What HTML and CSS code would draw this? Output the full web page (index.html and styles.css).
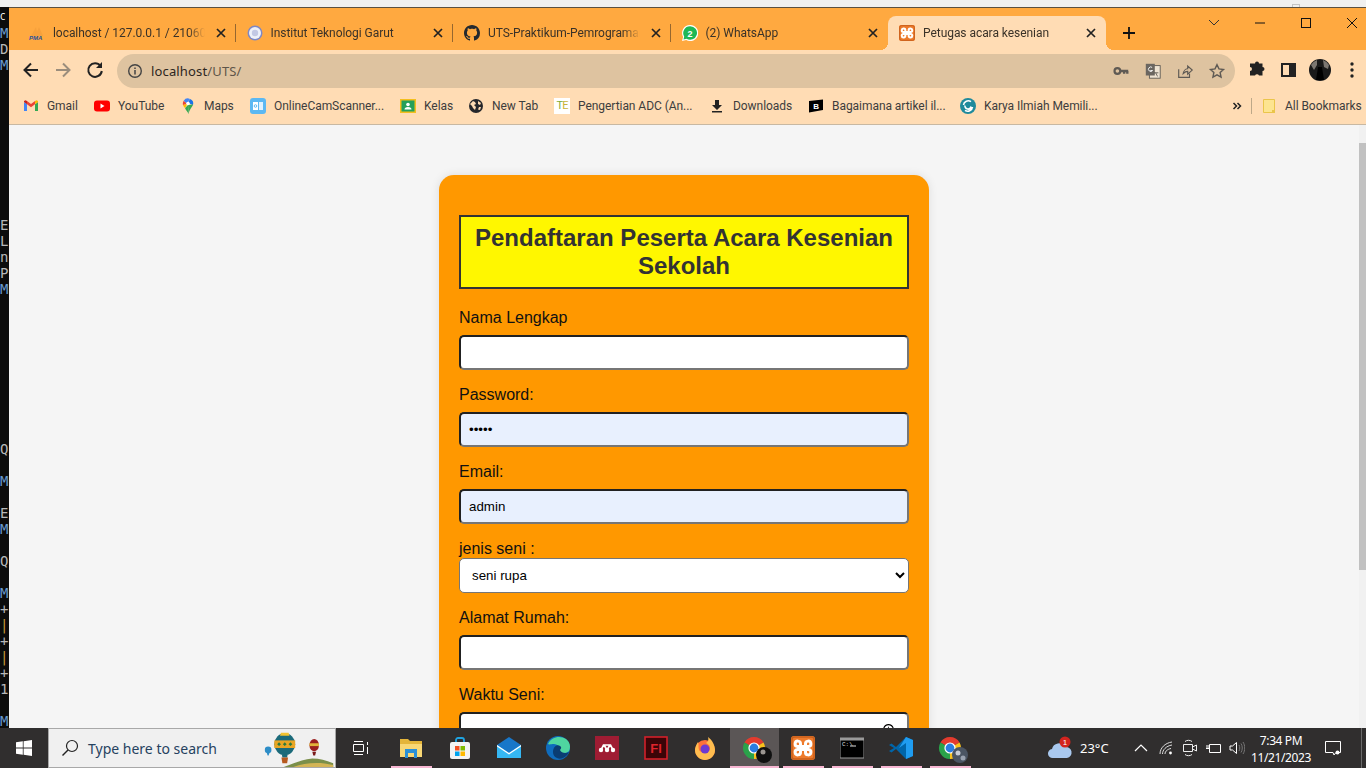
FILE: index.html
```html
<!DOCTYPE html>
<html lang="en">
<head>
    <meta charset="UTF-8">
    <meta name="viewport" content="width=device-width, initial-scale=1.0">
    <title>Petugas acara kesenian</title>
    <link rel="stylesheet" href="styles.css">
</head>
<body>
    <svg class="defs" width="0" height="0">
        <symbol id="chrome" viewBox="0 0 24 24">
            <path fill="#e33b2e" d="M12 12L2.47 6.500A11 11 0 0 1 21.530 6.500Z"/>
            <path fill="#f9c11c" d="M12 12L21.530 6.500A11 11 0 0 1 12 23Z"/>
            <path fill="#2aa24a" d="M12 12L12 23A11 11 0 0 1 2.47 6.500Z"/>
            <circle cx="12" cy="12" r="5.600" fill="#fff"/>
            <circle cx="12" cy="12" r="4.400" fill="#2a7de1"/>
        </symbol>
        <symbol id="xampp" viewBox="0 0 24 24">
            <rect width="24" height="24" rx="3" fill="#ee7b2c"/>
            <rect x="1" y="1" width="22" height="22" rx="2.500" fill="none" stroke="#c9601c" stroke-width="1.500"/>
            <path fill="none" stroke="#fff" stroke-width="3" d="M9.500 9.500V8A2.700 2.700 0 1 0 6.500 10.500H17.500A2.700 2.700 0 1 0 14.500 8V16A2.700 2.700 0 1 0 17.500 13.500H6.500A2.700 2.700 0 1 0 9.500 16V9.500"/>
        </symbol>
        <symbol id="close" viewBox="0 0 12 12">
            <path stroke="#222" stroke-width="1.700" fill="none" d="M2 2L10 10M10 2L2 10"/>
        </symbol>
    </svg>

    <div class="topstrip">
        <span class="ghost-max"></span>
    </div>

    <div class="screen">
        <pre class="console"><span class="con-icon">C</span>
<b>M</b>
D
<b>M</b>









E
L
n
P
<b>M</b>









Q

<b>M</b>

E
<b>M</b>

Q

<b>M</b>
+
<i>|</i>
+
<i>|</i>
+
1

<b>M</b></pre>

        <div class="browser">
            <div class="tabstrip">
                <div class="tab">
                    <svg class="favicon" viewBox="0 0 16 16">
                        <path fill="#f6a13c" d="M2 11L7 2l1 5 2-5 4 9z"/>
                        <text x="0" y="15" class="pma-text">PMA</text>
                    </svg>
                    <span class="tab-title">localhost / 127.0.0.1 / 21060</span>
                    <svg class="tab-x"><use href="#close"/></svg>
                </div>
                <div class="tab">
                    <svg class="favicon" viewBox="0 0 16 16">
                        <circle cx="8" cy="8" r="7.500" fill="#7f88c4"/>
                        <circle cx="8" cy="8" r="6" fill="#eef0f8"/>
                        <circle cx="8" cy="8" r="3.200" fill="#c3c8e4"/>
                    </svg>
                    <span class="tab-title">Institut Teknologi Garut</span>
                    <svg class="tab-x"><use href="#close"/></svg>
                </div>
                <div class="tab">
                    <svg class="favicon" viewBox="0 0 16 16">
                        <path fill="#24292f" d="M8 0C3.58 0 0 3.58 0 8c0 3.54 2.29 6.53 5.47 7.59.4.07.55-.17.55-.38 0-.19-.01-.82-.01-1.49-2.01.37-2.53-.49-2.69-.94-.09-.23-.48-.94-.82-1.13-.28-.15-.68-.52-.01-.53.63-.01 1.08.58 1.23.82.72 1.21 1.87.87 2.33.66.07-.52.28-.87.51-1.07-1.78-.2-3.64-.89-3.64-3.95 0-.87.31-1.59.82-2.15-.08-.2-.36-1.02.08-2.12 0 0 .67-.21 2.2.82.64-.18 1.32-.27 2-.27.68 0 1.36.09 2 .27 1.53-1.04 2.2-.82 2.2-.82.44 1.1.16 1.92.08 2.12.51.56.82 1.27.82 2.15 0 3.07-1.87 3.75-3.65 3.95.29.25.54.73.54 1.48 0 1.07-.01 1.93-.01 2.2 0 .21.15.46.55.38A8.013 8.013 0 0016 8c0-4.42-3.58-8-8-8z"/>
                    </svg>
                    <span class="tab-title">UTS-Praktikum-Pemrograman</span>
                    <svg class="tab-x"><use href="#close"/></svg>
                </div>
                <div class="tab">
                    <svg class="favicon" viewBox="0 0 16 16">
                        <path fill="#fff" d="M8 0a8 8 0 0 0-6.900 12L0 16l4.200-1.100A8 8 0 1 0 8 0z"/>
                        <path fill="#1fb855" d="M8 1.200a6.800 6.800 0 0 0-5.800 10.300l-.7 2.900 3-.7A6.800 6.800 0 1 0 8 1.200z"/>
                        <text x="8" y="11.500" class="wa-text">2</text>
                    </svg>
                    <span class="tab-title">(2) WhatsApp</span>
                    <svg class="tab-x"><use href="#close"/></svg>
                </div>
                <div class="tab tab-active">
                    <svg class="favicon"><use href="#xampp"/></svg>
                    <span class="tab-title">Petugas acara kesenian</span>
                    <svg class="tab-x"><use href="#close"/></svg>
                </div>
                <svg class="newtab" viewBox="0 0 14 14"><path stroke="#111" stroke-width="1.800" d="M7 1V13M1 7H13"/></svg>
                <div class="winbtns">
                    <svg class="winbtn" viewBox="0 0 46 30"><path stroke="#333" fill="none" d="M18 12l5 5 5-5"/></svg>
                    <svg class="winbtn" viewBox="0 0 46 30"><path stroke="#111" d="M18 15H28"/></svg>
                    <svg class="winbtn" viewBox="0 0 46 30"><rect x="18.500" y="10.500" width="9" height="9" stroke="#111" fill="none"/></svg>
                    <svg class="winbtn" viewBox="0 0 46 30"><path stroke="#111" fill="none" d="M18 10L28 20M28 10L18 20"/></svg>
                </div>
            </div>

            <div class="toolbar">
                <svg class="navbtn" viewBox="0 0 32 32"><path stroke="#222" stroke-width="2" fill="none" d="M23 16H10M16 9.500L9.500 16L16 22.500"/></svg>
                <svg class="navbtn" viewBox="0 0 32 32"><path stroke="#9b8d7c" stroke-width="2" fill="none" d="M9 16H22M16 9.500L22.500 16L16 22.500"/></svg>
                <svg class="navbtn" viewBox="0 0 32 32"><path stroke="#222" stroke-width="2" fill="none" d="M21.500 12a6.800 6.800 0 1 0 1.300 5"/><path fill="#222" d="M23 8v6h-6z"/></svg>
                <div class="omnibox">
                    <svg class="omni-info" viewBox="0 0 16 16">
                        <circle cx="8" cy="8" r="6.300" fill="none" stroke="#444" stroke-width="1.400"/>
                        <path stroke="#444" stroke-width="1.500" d="M8 7V11.500M8 4.500V6"/>
                    </svg>
                    <span class="url">localhost<em>/UTS/</em></span>
                    <svg class="omni-icon" viewBox="0 0 20 20"><circle cx="6" cy="10" r="3.200" fill="none" stroke="#5f5a54" stroke-width="2.400"/><path stroke="#5f5a54" stroke-width="2.600" d="M9 10H18M13.500 10V13M17 10V13"/></svg>
                    <svg class="omni-icon" viewBox="0 0 20 20"><rect x="6" y="4" width="12" height="14" fill="#eee3d2" stroke="#5f5a54"/><rect x="2" y="2" width="10" height="13" fill="#6b6660"/><path stroke="#fff" fill="none" d="M9 6a2.500 2.500 0 1 0 .5 3.500H7"/><path stroke="#5f5a54" d="M11 12h5M13 12l2 4"/></svg>
                    <svg class="omni-icon" viewBox="0 0 20 20"><path stroke="#5f5a54" stroke-width="1.300" fill="none" d="M3 8V17H15V13M8 13C8.500 9.500 11 7.500 13 7.500V4.500L18 9L13 13.500V10.500C11 10.500 9.500 11.500 8 13Z"/></svg>
                    <svg class="omni-icon" viewBox="0 0 20 20"><path stroke="#5f5a54" stroke-width="1.600" fill="none" d="M10 3l2.200 4.700 5 .6-3.700 3.400 1 5L10 14.200 5.500 16.700l1-5L2.800 8.300l5-.6z"/></svg>
                </div>
                <svg class="navbtn" viewBox="0 0 32 32"><path fill="#222" d="M12 9.500h3a2 2 0 0 1 4 0h3.500V13a2 2 0 0 1 0 4v4.500H19a2.200 2.200 0 0 0-4 0H10V17a2 2 0 0 0 0-4V9.500z"/></svg>
                <svg class="navbtn" viewBox="0 0 32 32"><path fill="none" stroke="#222" stroke-width="2" d="M10 10H23V22H10Z"/><path fill="#222" d="M17 10H23V22H17Z"/></svg>
                <svg class="navbtn" viewBox="0 0 32 32">
                    <circle cx="16" cy="16" r="11" fill="#1a1a1a"/>
                    <path fill="#7c7771" d="M7 11a11 11 0 0 1 6-5v5l-3 5zM25 11a11 11 0 0 0-6-5l1 7 4 2z"/>
                    <path fill="#000" d="M14 13h4l2 13h-8z"/>
                </svg>
                <svg class="navbtn" viewBox="0 0 32 32"><circle cx="16" cy="10" r="1.700" fill="#222"/><circle cx="16" cy="16" r="1.700" fill="#222"/><circle cx="16" cy="22" r="1.700" fill="#222"/></svg>
            </div>

            <div class="bookmarks">
                <div class="bm">
                    <svg class="bm-icon" viewBox="0 0 16 16">
                        <path fill="#4285f4" d="M1 13V4l3 2.300V13z"/><path fill="#34a853" d="M12 13V6.300L15 4v9z"/>
                        <path fill="#ea4335" d="M4 6.300V3l4 3 4-3v3.300L8 9.300z"/><path fill="#fbbc04" d="M12 3l1.500-.7L15 3v1l-3 2.300z"/><path fill="#c5221f" d="M1 3l1.500-.7L4 3v3.300L1 4z"/>
                    </svg>
                    <span>Gmail</span>
                </div>
                <div class="bm">
                    <svg class="bm-icon" viewBox="0 0 16 16"><rect y="2.500" width="16" height="11" rx="3" fill="#f00"/><path fill="#fff" d="M6.500 5.500L10.500 8l-4 2.500z"/></svg>
                    <span>YouTube</span>
                </div>
                <div class="bm">
                    <svg class="bm-icon" viewBox="0 0 16 16">
                        <path fill="#34a853" d="M5 10l3-3 .5 9c-1-2.500-2.500-3.500-3.500-6z"/>
                        <path fill="#fbbc04" d="M3 7l5-2-3 5c-1-1-1.700-2-2-3z"/>
                        <path fill="#ea4335" d="M3.700 2.700L7 5.500 3 7c-.400-1.500 0-3.100.7-4.300z"/>
                        <path fill="#4285f4" d="M3.700 2.700A5 5 0 0 1 10 1L7 5.500z"/>
                        <path fill="#1a73e8" d="M10 1a5 5 0 0 1 3 6L8 5z"/>
                        <path fill="#34a853" d="M8 7l5-.5c-.500 2.500-3.500 4.500-4.500 9.500z"/>
                        <circle cx="8" cy="5.500" r="1.800" fill="#fff"/>
                    </svg>
                    <span>Maps</span>
                </div>
                <div class="bm">
                    <svg class="bm-icon" viewBox="0 0 16 16"><rect width="16" height="16" rx="3" fill="#5cb8f2"/><rect x="3" y="4" width="5" height="8" fill="#fff"/><rect x="9" y="4" width="4" height="8" fill="#dff1fd"/><circle cx="5.500" cy="8" r="1.300" fill="none" stroke="#5cb8f2"/></svg>
                    <span>OnlineCamScanner...</span>
                </div>
                <div class="bm">
                    <svg class="bm-icon" viewBox="0 0 16 16"><rect y="1" width="16" height="14" fill="#f4bf1d"/><rect x="1.500" y="2.500" width="13" height="11" fill="#25a05a"/><circle cx="8" cy="6.500" r="1.800" fill="#fff"/><path fill="#fff" d="M4.500 11.500a3.500 2.500 0 0 1 7 0z"/></svg>
                    <span>Kelas</span>
                </div>
                <div class="bm">
                    <svg class="bm-icon" viewBox="0 0 16 16"><circle cx="8" cy="8" r="7" fill="#26272b"/><path fill="#ffdcb4" d="M2 6l3-3 2 1 1 2-2 1 2 2-1 3-2-2-1-2zM10 3l3 2-1 2-2-1zM11 9l2 0-1 3-2-.5z"/></svg>
                    <span>New Tab</span>
                </div>
                <div class="bm">
                    <span class="te-icon">T<i>E</i></span>
                    <span>Pengertian ADC (An...</span>
                </div>
                <div class="bm">
                    <svg class="bm-icon" viewBox="0 0 16 16"><path fill="#222" d="M6 2H10V7H13L8 12 3 7H6zM3 13H13V14.500H3z"/></svg>
                    <span>Downloads</span>
                </div>
                <div class="bm">
                    <svg class="bm-icon" viewBox="0 0 16 16"><path fill="#000" d="M1 3l14-1.500V12L1 14.500z"/><text x="8" y="11" class="b-text">B</text></svg>
                    <span>Bagaimana artikel il...</span>
                </div>
                <div class="bm">
                    <svg class="bm-icon" viewBox="0 0 16 16"><circle cx="8" cy="8" r="8" fill="#1f8a9c"/><path fill="none" stroke="#fff" stroke-width="1.600" d="M3.500 7A4.700 4.700 0 0 1 11 3.700M12.500 9A4.700 4.700 0 0 1 5 12.300M5 7.500A3 3 0 0 0 11 8.500"/></svg>
                    <span>Karya Ilmiah Memili...</span>
                </div>
                <svg class="bm-more" viewBox="0 0 10 10"><path fill="none" stroke="#222" stroke-width="1.500" d="M1.500 2L4.500 5 1.500 8M5.500 2L8.500 5 5.500 8"/></svg>
                <span class="bm-sep"></span>
                <div class="bm bm-all">
                    <svg class="bm-folder" viewBox="0 0 12 14"><path fill="#fde490" stroke="#eac54a" d="M.5.500H11.500V13.500H.5Z"/><path fill="#eac54a" d="M9 11h3v3H9z"/></svg>
                    <span>All Bookmarks</span>
                </div>
            </div>

            <div class="viewport">
                <main class="page">
                    <form class="card">
                        <h2>Pendaftaran Peserta Acara Kesenian Sekolah</h2>
                        <label for="nama">Nama Lengkap</label>
                        <input type="text" id="nama">
                        <label for="password">Password:</label>
                        <input type="password" id="password" class="autofill" value="admin">
                        <label for="email">Email:</label>
                        <input type="text" id="email" class="autofill" value="admin">
                        <label for="jenis" class="label-tight">jenis seni :</label>
                        <select id="jenis">
                            <option>seni rupa</option>
                            <option>seni musik</option>
                            <option>seni tari</option>
                        </select>
                        <label for="alamat">Alamat Rumah:</label>
                        <input type="text" id="alamat">
                        <label for="waktu">Waktu Seni:</label>
                        <input type="time" id="waktu">
                    </form>
                </main>
                <div class="scrollbar"><div class="scroll-thumb"></div></div>
            </div>
        </div>
    </div>

    <footer class="taskbar">
        <div class="start">
            <svg width="16" height="16" viewBox="0 0 16 16"><path fill="#fff" d="M0 2.300L6.800 1.300V7.600H0zM7.600 1.200L16 0V7.600H7.600zM0 8.400H6.800V14.700L0 13.700zM7.600 8.400H16V16L7.600 14.800z"/></svg>
        </div>
        <div class="search">
            <svg class="search-glass" viewBox="0 0 18 18"><circle cx="11" cy="7" r="5.500" fill="none" stroke="#222" stroke-width="1.200"/><path stroke="#222" stroke-width="1.400" d="M7 11L1.500 16.500"/></svg>
            <span class="search-text">Type here to search</span>
            <svg class="search-art" viewBox="0 0 72 40">
                <path fill="#7b8f4a" d="M20 40c10-4 20-8 30-9 8 0 14 2 22 5v4z"/>
                <path fill="#d3b455" d="M30 40c12-4 26-6 42-2v2z"/>
                <circle cx="3.500" cy="22" r="3.500" fill="#2d8dc7"/>
                <path fill="#2d8dc7" d="M2 25h3l-1 3H3z"/>
                <ellipse cx="21" cy="16" rx="11" ry="11.500" fill="#1b6a7a"/>
                <path fill="#e8a523" d="M10 12h22v8H10z"/>
                <path fill="#2f7a3c" d="M15 14l2 2-2 2-2-2zM21 14l2 2-2 2-2-2zM27 14l2 2-2 2-2-2z"/>
                <path fill="#f2c230" d="M17 4h8l1 3h-10z"/>
                <path fill="#1b6a7a" d="M18 27h6l-.5 3h-5z"/>
                <path fill="#b6591f" d="M17.500 30h7l-1 6h-5z"/>
                <ellipse cx="52" cy="17" rx="5" ry="6.500" fill="#9a1f1f"/>
                <path fill="#e0b23a" d="M47 15h10v3H47z"/>
                <path fill="#7a1a1a" d="M50 24h4l-1 4h-2z"/>
            </svg>
        </div>
        <div class="task task-view">
            <svg width="16" height="16" viewBox="0 0 16 16"><path fill="none" stroke="#fff" d="M.5 4.500H10.500V11.500H.5ZM1 1.500H10M1 14.500H10M14.500 2V5M14.500 7V14"/></svg>
        </div>
        <div class="task running">
            <svg class="task-icon" viewBox="0 0 24 24"><path fill="#e4b53a" d="M1 3H9L11 5H23V21H1Z"/><path fill="#f8d775" d="M1 8H23V21H1Z"/><path fill="#2a8fd6" d="M6 13H18V22H15V17H9V22H6Z"/></svg>
        </div>
        <div class="task">
            <svg class="task-icon" viewBox="0 0 24 24"><path fill="none" stroke="#1fa3e0" stroke-width="1.800" d="M8 6V4a2 2 0 0 1 2-2h4a2 2 0 0 1 2 2v2"/><rect x="2" y="6" width="20" height="17" rx="2" fill="#f3f3f3"/><rect x="7" y="10" width="4.500" height="4.500" fill="#f25022"/><rect x="12.500" y="10" width="4.500" height="4.500" fill="#7fba00"/><rect x="7" y="15.500" width="4.500" height="4.500" fill="#00a4ef"/><rect x="12.500" y="15.500" width="4.500" height="4.500" fill="#ffb900"/></svg>
        </div>
        <div class="task">
            <svg class="task-icon" viewBox="0 0 24 24"><path fill="#1877c9" d="M0 9L12 1 24 9V22H0Z"/><path fill="#35b7f3" d="M0 9L12 17 24 9V22H0Z"/><path fill="#fff" d="M0 9L12 17 24 9V10.500L12 18.500 0 10.500Z"/></svg>
        </div>
        <div class="task">
            <svg class="task-icon" viewBox="0 0 24 24"><circle cx="12" cy="12" r="12" fill="#0f6cbd"/><path fill="#4fd6a0" d="M2 8C5 1 14-1 20 3c4 3 5 8 3 12-3 3-9 3-10 0 2-2-1-7-5-7-3 0-5 1-6 0z"/><path fill="#0a3d73" d="M7 16c0-5 4-8 7-6 2 1 1 3 0 4 1 3 6 4 9 2-2 5-8 8-12 6-3-1-4-4-4-6z"/></svg>
        </div>
        <div class="task">
            <svg class="task-icon" viewBox="0 0 24 24"><rect width="24" height="24" fill="#9f1c33"/><circle cx="6" cy="14" r="2.200" fill="#fff"/><circle cx="12" cy="14" r="2.200" fill="#fff"/><circle cx="18" cy="14" r="2.200" fill="#fff"/><path fill="none" stroke="#fff" stroke-width="1.700" d="M6 14L8.500 9H15.500L18 14M9 9l3 5 3-5"/></svg>
        </div>
        <div class="task">
            <svg class="task-icon" viewBox="0 0 24 24"><rect x="1" y="1" width="22" height="22" fill="#3b0508" stroke="#d3202a" stroke-width="1.600"/><text x="12" y="17" class="fl-text">Fl</text></svg>
        </div>
        <div class="task">
            <svg class="task-icon" viewBox="0 0 24 24"><circle cx="12" cy="14" r="10" fill="#ff7139"/><path fill="#ffbd4f" d="M5 6C3 9 2 12 2 14c0 6 5 10 10 10s10-4 10-10c0-5-3-10-7-13 1 3 0 5-2 6 4 2 5 5 3 8-3 3-8 2-10-1-1-3 0-6-1-8z"/><circle cx="12" cy="13" r="4.500" fill="#6e3bd1"/></svg>
        </div>
        <div class="task task-active">
            <svg class="task-icon"><use href="#chrome"/></svg>
            <svg class="task-badge" viewBox="0 0 16 16"><circle cx="8" cy="8" r="8" fill="#111"/><circle cx="7" cy="5" r="2.500" fill="#9a9590"/></svg>
        </div>
        <div class="task running">
            <svg class="task-icon"><use href="#xampp"/></svg>
        </div>
        <div class="task running">
            <svg class="task-icon" viewBox="0 0 24 24"><rect y="2" width="24" height="20" fill="#000" stroke="#9a9a9a"/><rect y="2" width="24" height="2.500" fill="#9a9a9a"/><text x="2" y="10" class="cmd-text">C:\</text><path stroke="#ddd" d="M10 10H16"/></svg>
        </div>
        <div class="task running">
            <svg class="task-icon" viewBox="0 0 24 24"><path fill="#0065a9" d="M17 1L7 11 2.500 7.500 0 9l5 3-5 3 2.500 1.500L7 13l10 10 7-3V4z"/><path fill="#1f9cf0" d="M17 1l7 3v16l-7 3V7l-7 5 7 5-7-5z"/></svg>
        </div>
        <div class="task running">
            <svg class="task-icon"><use href="#chrome"/></svg>
            <svg class="task-badge" viewBox="0 0 16 16"><circle cx="8" cy="8" r="8" fill="#4b5563"/><circle cx="6" cy="6" r="2.500" fill="#c8ccd4"/><circle cx="11" cy="11" r="2.500" fill="#9aa2b0"/></svg>
        </div>

        <div class="tray">
            <div class="tray-item weather">
                <svg width="26" height="24" viewBox="0 0 26 24">
                    <path fill="#a9c8ee" d="M6 22a4.500 4.500 0 0 1-1-9 7 7 0 0 1 13-2 5.500 5.500 0 0 1 2 11z"/>
                    <circle cx="18" cy="6" r="5.500" fill="#d3241f"/>
                    <text x="18" y="8.500" class="badge-text">1</text>
                </svg>
            </div>
            <span class="tray-item temp">23°C</span>
            <div class="tray-item"><svg width="14" height="10" viewBox="0 0 14 10"><path fill="none" stroke="#fff" stroke-width="1.200" d="M1 8L7 2l6 6"/></svg></div>
            <div class="tray-item"><svg width="14" height="14" viewBox="0 0 14 14"><path fill="none" stroke="#ddd" d="M1 13C1 7 6 2 13 1M3.500 13C3.500 9 7 5 13 4M6 13c0-3 3-5 6-5.500"/><circle cx="11.500" cy="12" r="1.400" fill="#fff"/></svg></div>
            <div class="tray-item"><svg width="16" height="18" viewBox="0 0 16 18"><path fill="none" stroke="#eee" d="M1.500 5.500H10.500V12.500H1.500ZM10.500 8L14.500 6V12L10.500 10M3 2.500C5 .9 8 .9 10 2.500M3 15.500C5 17.100 8 17.100 10 15.500"/></svg></div>
            <div class="tray-item"><svg width="16" height="12" viewBox="0 0 16 12"><path fill="none" stroke="#fff" d="M4.500 2.500H15.500V10.500H4.500V2.500M1 6.500H4.500M2 3V6M4 3V6"/></svg></div>
            <div class="tray-item"><svg width="16" height="14" viewBox="0 0 16 14"><path fill="none" stroke="#fff" d="M1 5H3.500L7.500 1.500V12.500L3.500 9H1Z"/><path fill="none" stroke="#777" d="M10 4c1 1.500 1 4.500 0 6M12 2.500c1.700 2.500 1.700 6.500 0 9M14 1c2.300 3.500 2.300 8.500 0 12"/></svg></div>
            <div class="tray-item clock"><span>7:34 PM</span><span>11/21/2023</span></div>
            <div class="tray-item"><svg width="16" height="16" viewBox="0 0 16 16"><path fill="none" stroke="#fff" d="M.5 1.500H15.500V12.500H11L9 15 8 12.500H.5Z"/><circle cx="12.500" cy="12.500" r="2" fill="#fff"/></svg></div>
            <div class="tray-end"></div>
        </div>
    </footer>
</body>
</html>
```

FILE: styles.css
```css
* {
    box-sizing: border-box;
}
html, body {
    height: 100%;
}
body {
    margin: 0;
    height: 768px;
    display: flex;
    flex-direction: column;
    overflow: hidden;
    font-family: "Noto Sans", sans-serif;
    background: #f0f0f0;
}
.defs {
    position: absolute;
}

/* what shows of the windows behind */
.topstrip {
    height: 7px;
    background: #f0f0f0;
    display: flex;
    justify-content: flex-end;
    flex: none;
}
.ghost-max {
    width: 8px;
    height: 3px;
    margin: 4px 66px 0 0;
    border: 1px solid #c4c4c4;
    border-bottom: none;
}
.screen {
    flex: 1;
    display: flex;
    min-height: 0;
}
.console {
    width: 9px;
    flex: none;
    margin: 0;
    background: #0c0c0c;
    color: #b8b8b8;
    font-family: "DejaVu Sans Mono", monospace;
    font-size: 14px;
    line-height: 16px;
    overflow: hidden;
}
.console b {
    font-weight: normal;
    color: #6a9ccf;
}
.console i {
    font-style: normal;
    color: #c79a3a;
}
.con-icon {
    color: #fff;
    font-size: 9px;
}

/* chrome window */
.browser {
    flex: 1;
    min-width: 0;
    display: flex;
    flex-direction: column;
    border-top: 1px solid #5a5040;
    overflow: hidden;
}
.tabstrip {
    height: 42px;
    flex: none;
    background: #ffa940;
    display: flex;
    align-items: flex-end;
    padding-left: 9px;
}
.tab {
    width: 217.5px;
    height: 34px;
    flex: none;
    display: flex;
    align-items: center;
    padding: 0 9px 0 11px;
    position: relative;
    font-family: Roboto, sans-serif;
    font-size: 12px;
    letter-spacing: -0.05px;
    color: #3a3228;
}
.tab::after {
    content: "";
    position: absolute;
    right: 0;
    top: 8px;
    height: 18px;
    width: 1px;
    background: #96672f;
}
.tab:nth-child(4)::after {
    display: none;
}
.tab-active {
    background: #ffdcb4;
    border-radius: 8px 8px 0 0;
}
.tab-active::before,
.tab-active::after {
    content: "";
    position: absolute;
    bottom: 0;
    top: auto;
    width: 8px;
    height: 8px;
    background: radial-gradient(circle at 0 0, transparent 8px, #ffdcb4 8px);
}
.tab-active::before {
    left: -8px;
}
.tab-active::after {
    right: -8px;
    background: radial-gradient(circle at 100% 0, transparent 8px, #ffdcb4 8px);
}
.favicon {
    width: 16px;
    height: 16px;
    flex: none;
    margin-right: 8px;
}
.tab-title {
    flex: 1;
    white-space: nowrap;
    overflow: hidden;
    -webkit-mask-image: linear-gradient(to right, #000 135px, transparent 152px);
    mask-image: linear-gradient(to right, #000 135px, transparent 152px);
}
.tab-x {
    width: 12px;
    height: 12px;
    flex: none;
}
.pma-text {
    font: italic bold 6px "Liberation Sans", sans-serif;
    fill: #2b4f9a;
}
.wa-text {
    font: bold 9px "Liberation Sans", sans-serif;
    fill: #fff;
    text-anchor: middle;
}
.newtab {
    width: 14px;
    height: 14px;
    margin: 0 0 10px 16px;
    flex: none;
}
.winbtns {
    margin: 0 -9px 0 auto;
    align-self: flex-start;
    display: flex;
}
.winbtn {
    width: 46px;
    height: 30px;
    flex: none;
}

.toolbar {
    height: 38px;
    flex: none;
    background: #ffdcb4;
    display: flex;
    align-items: flex-end;
    padding-left: 6px;
}
.navbtn {
    width: 32px;
    height: 32px;
    flex: none;
    margin-bottom: 2px;
}
.omnibox {
    width: 1118px;
    height: 34px;
    flex: none;
    margin: 0 5px 0 6px;
    border-radius: 17px;
    background: #dec3a0;
    display: flex;
    align-items: center;
    padding: 0 9px 0 10px;
    font-size: 13px;
}
.omni-info {
    width: 16px;
    height: 16px;
    flex: none;
}
.url {
    flex: 1;
    margin-left: 8px;
    letter-spacing: 0.15px;
    color: #2c2620;
}
.url em {
    font-style: normal;
    color: #5e5549;
}
.omni-icon {
    width: 18px;
    height: 18px;
    margin-left: 14px;
    flex: none;
}

.bookmarks {
    height: 37px;
    flex: none;
    background: #ffdcb4;
    border-bottom: 1px solid #c8b8a2;
    display: grid;
    grid-template-columns: 71px 86px 70px 150px 68px 86px 155px 99px 152px 268px 18px 17px 1fr;
    align-items: center;
    padding: 0 0 1px 14px;
    font-family: Roboto, sans-serif;
    font-size: 12px;
    letter-spacing: -0.05px;
    color: #3d3d3d;
}
.bm {
    display: flex;
    align-items: center;
    gap: 8px;
    white-space: nowrap;
}
.bm-icon {
    width: 16px;
    height: 16px;
    flex: none;
}
.te-icon {
    width: 16px;
    height: 16px;
    flex: none;
    background: #fff;
    color: #7dab3a;
    font-size: 11px;
    line-height: 16px;
    text-align: center;
    letter-spacing: -1px;
}
.te-icon i {
    font-style: normal;
    color: #c9b33a;
}
.b-text {
    font: bold 8px "Liberation Sans", sans-serif;
    fill: #fff;
    text-anchor: middle;
}
.bm-more {
    width: 10px;
    height: 10px;
    justify-self: center;
}
.bm-sep {
    width: 1px;
    height: 16px;
    margin-left: 5px;
    background: #bda888;
}
.bm-folder {
    width: 12px;
    height: 14px;
    flex: none;
}
.bm-all {
    gap: 10px;
}

/* the page itself */
.viewport {
    flex: 1;
    min-height: 0;
    display: flex;
    background: #f5f5f5;
}
.page {
    flex: 1;
    overflow: hidden;
    padding-top: 50px;
}
.scrollbar {
    width: 7px;
    flex: none;
    background: #f1f1f1;
    padding-top: 18px;
}
.scroll-thumb {
    height: 427px;
    background: #c1c1c1;
}
.card {
    width: 490px;
    margin: 0 auto;
    padding: 40px 20px 20px;
    background: #ff9800;
    border-radius: 15px;
    box-shadow: 0 0 10px rgba(0, 0, 0, 0.1);
    font-family: "Liberation Sans", Arial, sans-serif;
}
.card h2 {
    margin: 0 0 20px;
    padding: 7px 10px;
    border: 2px solid #333;
    background: #fff700;
    color: #333;
    font-size: 24px;
    line-height: 28px;
    text-align: center;
}
.card label {
    display: block;
    height: 18px;
    margin-bottom: 8px;
    font-size: 16px;
    line-height: 18px;
    color: #111;
}
.card .label-tight {
    margin-bottom: 0;
}
.card input,
.card select {
    display: block;
    width: 100%;
    height: 35px;
    margin-bottom: 16px;
    padding: 8px;
    border-radius: 5px;
    background: #fff;
    font-family: "Liberation Sans", Arial, sans-serif;
    font-size: 13.33px;
    color: #000;
}
.card input {
    border: 2px inset #767676;
}
.card select {
    border: 1px solid #767676;
    padding-left: 8px;
}
.card .autofill {
    background: #e8f0fe;
}
.card input::-webkit-datetime-edit {
    padding-top: 4px;
}

/* windows taskbar */
.taskbar {
    height: 40px;
    flex: none;
    background: #302e2e;
    display: flex;
    align-items: stretch;
}
.start {
    width: 48px;
    flex: none;
    display: flex;
    align-items: center;
    justify-content: center;
}
.search {
    width: 288px;
    flex: none;
    background: #f0f0f0;
    border: 1px solid #a8a8a8;
    display: flex;
    align-items: center;
    padding-left: 12px;
    position: relative;
    font-size: 14px;
    color: #26425f;
}
.search-glass {
    width: 18px;
    height: 18px;
    flex: none;
}
.search-text {
    margin-left: 9px;
}
.search-art {
    position: absolute;
    right: 0;
    bottom: 0;
    width: 72px;
    height: 38px;
}
.task {
    width: 49px;
    flex: none;
    display: flex;
    align-items: center;
    justify-content: center;
    position: relative;
}
.task-view {
    width: 50.5px;
}
.task-icon {
    width: 24px;
    height: 24px;
}
.running::after,
.task-active::after {
    content: "";
    position: absolute;
    bottom: 0;
    left: 4px;
    right: 4px;
    height: 2px;
    background: #f7b6d2;
}
.task-active {
    background: #5b5656;
}
.task-active::after {
    left: 0;
    right: 0;
}
.task-badge {
    position: absolute;
    left: 26px;
    top: 19px;
    width: 16px;
    height: 16px;
}
.fl-text {
    font: bold 13px "Liberation Sans", sans-serif;
    fill: #e0242c;
    text-anchor: middle;
}
.cmd-text {
    font: 6px "Liberation Mono", monospace;
    fill: #ddd;
}
.tray {
    margin-left: auto;
    display: grid;
    grid-template-columns: 36px 50px 25px 25px 23px 23px 25px 64px 40px 13px;
    color: #fff;
    font-size: 12px;
}
.tray-item {
    display: flex;
    align-items: center;
    justify-content: center;
}
.temp {
    justify-content: flex-start;
    padding-left: 2px;
    font-size: 13px;
}
.clock {
    flex-direction: column;
    padding-top: 1px;
    line-height: 17px;
    white-space: nowrap;
    letter-spacing: -0.4px;
}
.badge-text {
    font: 8px "Liberation Sans", sans-serif;
    fill: #fff;
    text-anchor: middle;
}
.tray-end {
    border-left: 1px solid #6a6a6a;
    margin-left: 8px;
}
```
